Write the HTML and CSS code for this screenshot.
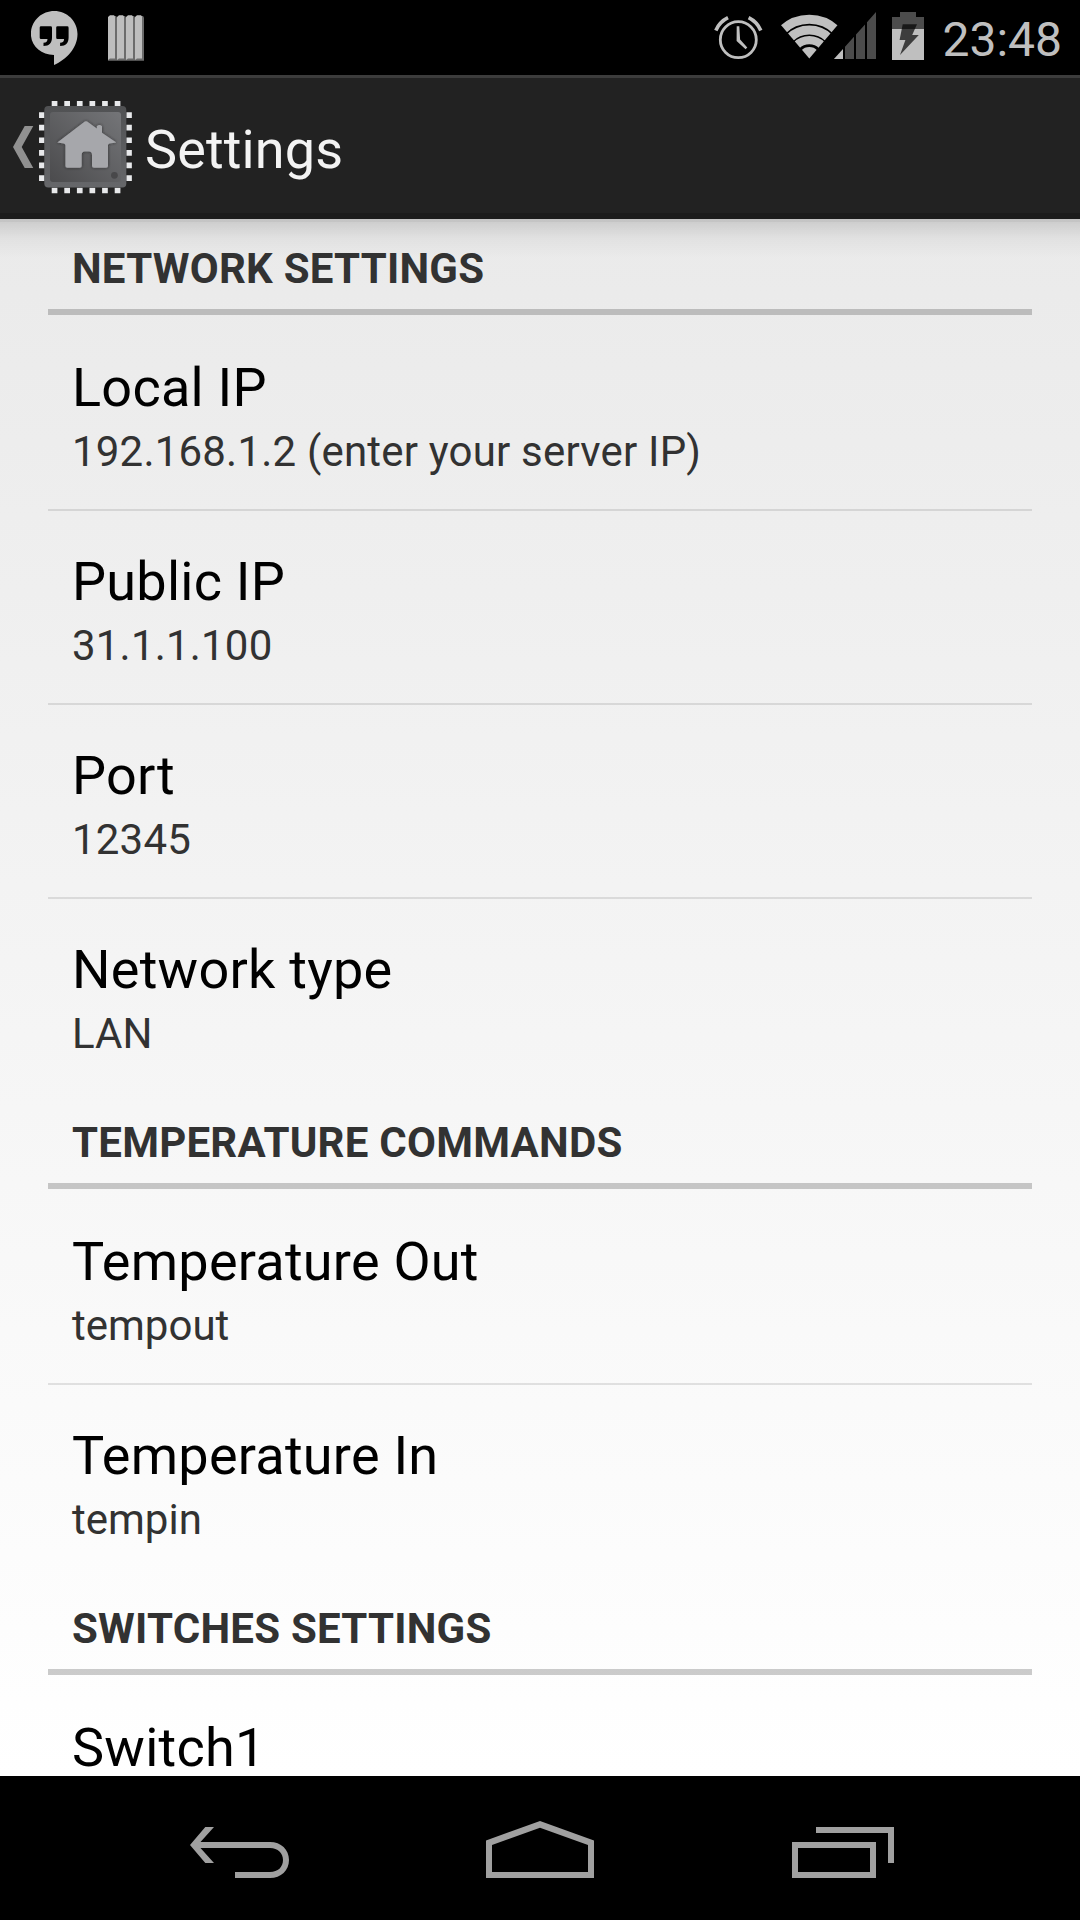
FILE: index.html
```
<!DOCTYPE html>
<html lang="en">
<head>
<meta charset="utf-8">
<title>Settings</title>
<link rel="stylesheet" href="styles.css">
</head>
<body>
<div class="screen">
  <div class="status-bar">
    <div class="notifications">
      <svg class="icon-chat" width="47" height="55" viewBox="31 11 47 55">
        <path fill="#bfbfbf" d="M54 55C41 55 30.9 46 30.9 34 30.9 21 41.500 11 54.200 11S77.500 21 77.500 34c0 14-11 25.500-23.500 31z"/>
        <path fill="#000" d="M41 26.300h9.600q1.400 0 1.400 1.400V37.500c0 5-2.600 8.500-8.500 8.500v-3.300c3 0 3.900-1.500 4-3.700H41q-1.300 0-1.300-1.300V27.600q0-1.300 1.300-1.300zM57.500 26.300h9.700q1.400 0 1.400 1.400V37.500c0 5-2.600 8.500-8.500 8.500v-3.300c3 0 3.900-1.500 4-3.700H57.500q-1.300 0-1.300-1.300V27.600q0-1.300 1.300-1.300z"/>
      </svg>
      <svg class="icon-strips" width="36" height="46" viewBox="0 0 36 46">
        <defs>
          <g id="strip">
            <path fill="#6b6b6b" d="M6 1h2l1 1.500v43.200H0v-1z"/>
            <path fill="#bdbdbd" d="M0 2L2 .2h4L7 1.500V43.500H2L0 45z"/>
          </g>
        </defs>
        <use href="#strip"/><use href="#strip" x="9"/><use href="#strip" x="18"/><use href="#strip" x="27"/>
      </svg>
    </div>
    <div class="indicators">
      <svg class="icon-alarm" width="50" height="46" viewBox="714 15 50 46" fill="none" stroke="#bfbfbf">
        <circle cx="738.300" cy="39.700" r="18" stroke-width="2.800"/>
        <path stroke-width="3.600" d="M715.800 30.400a26 26 0 0 1 12.200-12.700M748.600 17.700a26 26 0 0 1 12.200 12.700"/>
        <path fill="#bfbfbf" stroke="none" d="M736.700 26.300h2.600l.8 13.200 7.200 8-1.700 1.800-9-8.300z"/>
      </svg>
      <svg class="icon-signal" width="97" height="48" viewBox="5 3 97 48">
        <defs><clipPath id="fan"><path d="M34.300 50.500L5.300 16.300V0H63.300V16.300z"/></clipPath></defs>
        <g clip-path="url(#fan)" fill="none" stroke="#bfbfbf">
          <circle cx="34.300" cy="50.500" r="39.200" stroke-width="9"/>
          <circle cx="34.300" cy="50.500" r="28.400" stroke-width="9"/>
          <circle cx="34.300" cy="50.500" r="18.300" stroke-width="8.200"/>
          <circle cx="34.300" cy="50.500" r="5.700" stroke-width="11.400"/>
        </g>
        <path fill="#bfbfbf" d="M58 52L68 41v11z"/>
        <path fill="#4c4c4c" d="M70 38.800L79 28.800V52h-9zM81 26.500L90 16.500V52h-9zM92 14.200L101 4V52h-9z"/>
      </svg>
      <svg class="icon-battery" width="32" height="48" viewBox="0 0 32 48">
        <path fill="#4c4c4c" d="M8 0h16v5h8v12H0V5h8z"/>
        <path fill="#bfbfbf" d="M0 17h32v31H0z"/>
        <path fill="#000" fill-opacity=".68" d="M10.700 12.300h14.300L20.200 23h6.600L8 43l5.400-15H7.600z"/>
      </svg>
      <span class="clock">23:48</span>
    </div>
  </div>

  <div class="action-bar">
    <svg class="icon-app" width="120" height="93" viewBox="12 101 120 93">
      <defs>
        <linearGradient id="face" x1="0" y1="1" x2="1" y2="0">
          <stop offset="0" stop-color="#4b4b4d"/><stop offset="1" stop-color="#747578"/>
        </linearGradient>
        <linearGradient id="rim" x1="0" y1="0" x2="0" y2="1">
          <stop offset="0" stop-color="#505153"/><stop offset="1" stop-color="#66676a"/>
        </linearGradient>
        <filter id="glow" x="-20%" y="-20%" width="140%" height="140%">
          <feDropShadow dx="0" dy="0" stdDeviation="1.800" flood-color="#222" flood-opacity=".8"/>
        </filter>
      </defs>
      <path fill="#919191" d="M24.700 126h8.600L21.700 147l11.600 21h-8.600L13 147z"/>
      <g stroke="#e8e9eb" stroke-width="5.500" stroke-dasharray="5.700 6.900">
        <path d="M51.700 103.700H121M51.700 190.400H121M41.800 112.200V181M129.100 112.200V181"/>
      </g>
      <rect x="44.300" y="106" width="82" height="81.500" rx="4" fill="url(#rim)"/>
      <rect x="50" y="112" width="71" height="70" rx="3" fill="url(#face)"/>
      <path filter="url(#glow)" fill="#a6a7ab" d="M84.800 121.500q1.200-.6 2.400 0l9.600 7v-2.200q2.600-2.500 5.200 0v6.500l14.300 9.700-6.500 1c-1.200.3-1.800.8-1.800 2V166q0 1.800-1.800 1.800H94Q92 167.800 92 166V155q0-3.500-3-3.500h-4.300q-3 0-3 3.500v11q0 1.800-1.800 1.800H67.200q-1.800 0-1.800-1.800V145.500c0-1.200-.7-1.700-1.900-2l-6.200-1z"/>
      <circle cx="114.400" cy="175.300" r="3.400" fill="#48484a"/>
    </svg>
    <h1 class="screen-title">Settings</h1>
  </div>

  <div class="preferences">
    <div class="group">
      <h2 class="category">NETWORK SETTINGS</h2>
      <div class="item"><div class="title">Local IP</div><div class="summary numeric">192.168.1.2 (enter your server IP)</div></div>
      <div class="item"><div class="title">Public IP</div><div class="summary numeric">31.1.1.100</div></div>
      <div class="item"><div class="title">Port</div><div class="summary numeric">12345</div></div>
      <div class="item"><div class="title">Network type</div><div class="summary">LAN</div></div>
    </div>
    <div class="group">
      <h2 class="category">TEMPERATURE COMMANDS</h2>
      <div class="item"><div class="title">Temperature Out</div><div class="summary">tempout</div></div>
      <div class="item"><div class="title">Temperature In</div><div class="summary">tempin</div></div>
    </div>
    <div class="group">
      <h2 class="category">SWITCHES SETTINGS</h2>
      <div class="item"><div class="title">Switch1</div></div>
    </div>
  </div>

  <div class="nav-bar">
    <svg width="99" height="57" viewBox="0 0 99 57">
      <path fill="#a0a0a0" d="M15.300 6h8.700L10.500 21H80c11 0 19 7.500 19 18s-8 18-19 18H45V51H80c8 0 13-5 13-12s-5-12-13-12H10.500L24 42H15.300L0 24z"/>
    </svg>
    <svg width="108" height="57" viewBox="0 0 108 57">
      <path fill="#a0a0a0" fill-rule="evenodd" d="M54 0l54 19.500V57H0V19.500zM54 6.800L6 24V51h96V24z"/>
    </svg>
    <svg class="icon-recents" width="102" height="57" viewBox="0 0 102 57">
      <path fill="#a0a0a0" fill-rule="evenodd" d="M0 21h84v36H0zM6 27v24h72V27zM24 6h78v36h-6V12H24z"/>
    </svg>
  </div>
</div>
</body>
</html>
```
FILE: styles.css
```
* {
  box-sizing: border-box;
}

body {
  margin: 0;
  font-family: Roboto, sans-serif;
}

h1,
h2 {
  margin: 0;
}

svg {
  display: block;
  flex: none;
}

.screen {
  display: flex;
  flex-direction: column;
  width: 1080px;
  height: 1920px;
  overflow: hidden;
  background: #000;
}

/* Status bar */
.status-bar {
  display: flex;
  justify-content: space-between;
  flex: none;
  height: 75px;
  padding: 0 18px 0 31px;
  background: #000;
}

.notifications,
.indicators {
  display: flex;
  align-items: flex-start;
}

.icon-chat {
  margin-top: 11px;
}

.icon-strips {
  margin: 15px 0 0 30px;
}

.icon-alarm {
  margin-top: 15px;
}

.icon-signal {
  margin: 11px 0 0 16px;
}

.icon-battery {
  margin: 12px 0 0 15px;
}

.clock {
  margin: 11px 0 0 18px;
  color: #bfbfbf;
  font-size: 48px;
  line-height: 57px;
}

/* Action bar */
.action-bar {
  display: flex;
  align-items: flex-start;
  flex: none;
  height: 144px;
  padding-left: 12px;
  border-top: 3px solid #3c3c3c;
  border-bottom: 6px solid #1c1c1c;
  background: #222;
}

.icon-app {
  margin-top: 23px;
}

.screen-title {
  margin: 40px 0 0 13px;
  color: #f3f3f3;
  font-size: 54px;
  font-weight: 400;
  line-height: 63px;
  letter-spacing: .12px;
}

/* Preference list */
.preferences {
  flex: none;
  height: 1557px;
  padding: 0 48px;
  overflow: hidden;
  background:
    linear-gradient(rgba(0, 0, 0, .16), rgba(0, 0, 0, .16)) 0 0 / 100% 3px no-repeat,
    linear-gradient(rgba(0, 0, 0, .12), rgba(0, 0, 0, .04) 45%, rgba(0, 0, 0, 0)) 0 3px / 100% 36px no-repeat,
    linear-gradient(#eaeaea, #fff);
}

.category {
  height: 96px;
  margin-bottom: 2px;
  padding: 25px 24px 0;
  border-bottom: 6px solid rgba(0, 0, 0, .2);
  color: #323232;
  font-size: 42px;
  font-weight: 700;
  line-height: 49px;
  letter-spacing: .24px;
}

.item {
  height: 194px;
  padding: 42px 24px 0;
  border-bottom: 2px solid rgba(0, 0, 0, .1);
}

.item:last-child {
  border-bottom-color: transparent;
}

.title {
  color: #000;
  font-size: 54px;
  line-height: 57px;
  letter-spacing: .25px;
}

.summary {
  margin-top: 11px;
  color: #323232;
  font-size: 42px;
  line-height: 49px;
}

.numeric {
  letter-spacing: .2px;
}

/* Navigation bar */
.nav-bar {
  display: flex;
  flex: 1;
  gap: 197px;
  align-items: flex-start;
  padding: 45px 0 0 190px;
  background: #000;
}

.icon-recents {
  margin-left: 1px;
}
```
